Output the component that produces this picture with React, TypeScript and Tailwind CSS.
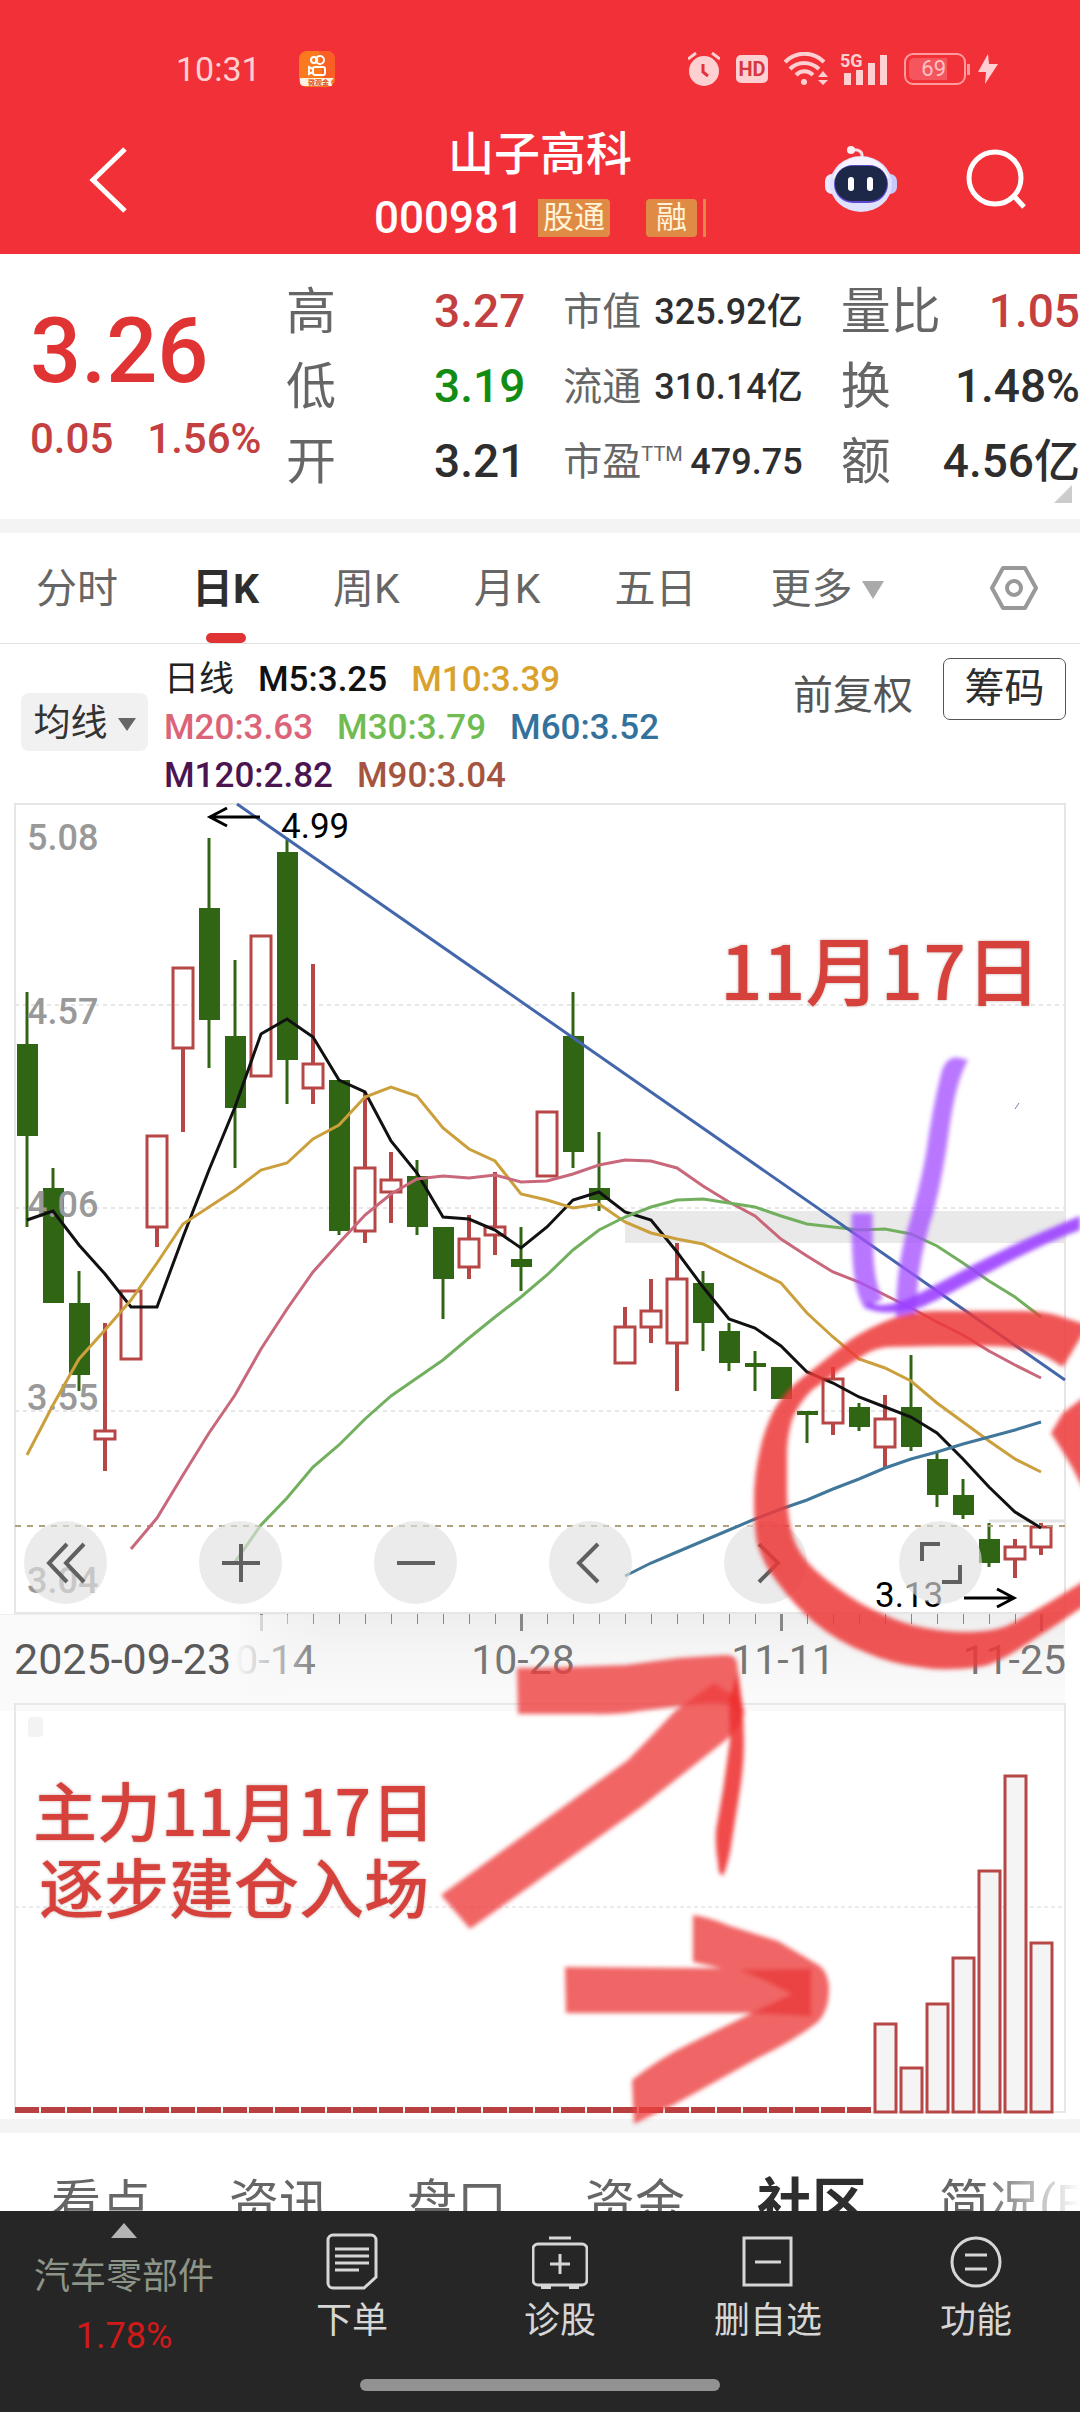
import { useState } from 'react';

const FONT = "font-['Roboto','Noto_Sans_CJK_SC',sans-serif]";

const GREEN = '#306613';
const RED = '#b74646';

// x position of the n-th trading day
const dayX = (i: number) => 27 + i * 26;

// [rising, high, body top, body bottom, low]
type Candle = [boolean, number, number, number, number];

const candles: Candle[] = [
  [false, 992, 1044, 1136, 1227],
  [false, 1168, 1188, 1303, 1303],
  [false, 1271, 1303, 1375, 1391],
  [true, 1323, 1430, 1440, 1471],
  [true, 1290, 1290, 1360, 1360],
  [true, 1135, 1135, 1228, 1247],
  [true, 967, 967, 1049, 1132],
  [false, 838, 908, 1020, 1068],
  [false, 960, 1036, 1108, 1168],
  [true, 935, 935, 1077, 1077],
  [false, 838, 852, 1060, 1104],
  [true, 964, 1063, 1089, 1104],
  [false, 1080, 1080, 1231, 1235],
  [true, 1092, 1167, 1232, 1243],
  [true, 1152, 1179, 1193, 1223],
  [false, 1160, 1176, 1227, 1235],
  [false, 1227, 1227, 1279, 1319],
  [true, 1215, 1238, 1268, 1279],
  [true, 1172, 1226, 1236, 1255],
  [false, 1227, 1259, 1267, 1291],
  [true, 1111, 1111, 1177, 1177],
  [false, 992, 1036, 1152, 1168],
  [false, 1132, 1188, 1200, 1211],
  [true, 1307, 1326, 1364, 1364],
  [true, 1279, 1310, 1328, 1343],
  [true, 1243, 1278, 1344, 1391],
  [false, 1271, 1283, 1323, 1351],
  [false, 1323, 1331, 1363, 1371],
  [false, 1351, 1363, 1367, 1391],
  [false, 1367, 1367, 1399, 1399],
  [false, 1411, 1411, 1415, 1443],
  [true, 1367, 1378, 1424, 1435],
  [false, 1403, 1407, 1427, 1431],
  [true, 1395, 1418, 1448, 1467],
  [false, 1355, 1407, 1447, 1451],
  [false, 1453, 1459, 1495, 1507],
  [false, 1479, 1495, 1515, 1519],
  [false, 1523, 1539, 1563, 1567],
  [true, 1539, 1546, 1560, 1578],
  [true, 1523, 1526, 1548, 1555],
];

const averages = [
  {
    name: 'M5',
    color: '#111111',
    start: 0,
    ys: [1220, 1211, 1245, 1274, 1307, 1307, 1237, 1170, 1107, 1034, 1019, 1037, 1080, 1092, 1141, 1173, 1217, 1219, 1230, 1248, 1227, 1200, 1192, 1212, 1220, 1252, 1287, 1319, 1328, 1346, 1372, 1383, 1397, 1407, 1417, 1433, 1459, 1487, 1512, 1528],
  },
  {
    name: 'M10',
    color: '#cb9f3c',
    start: 0,
    ys: [1455, 1405, 1359, 1330, 1300, 1263, 1224, 1207, 1190, 1170, 1163, 1139, 1125, 1097, 1087, 1096, 1128, 1149, 1161, 1194, 1200, 1208, 1204, 1222, 1233, 1239, 1244, 1257, 1270, 1283, 1313, 1337, 1359, 1368, 1381, 1403, 1422, 1441, 1459, 1472],
  },
  {
    name: 'M20',
    color: '#c8687a',
    start: 4,
    ys: [1549, 1518, 1475, 1433, 1395, 1349, 1309, 1272, 1243, 1215, 1194, 1179, 1176, 1178, 1175, 1182, 1181, 1174, 1165, 1160, 1161, 1168, 1186, 1202, 1216, 1239, 1256, 1272, 1282, 1295, 1308, 1322, 1335, 1351, 1365, 1378],
  },
  {
    name: 'M30',
    color: '#72b05f',
    start: 8,
    ys: [1562, 1525, 1498, 1467, 1445, 1419, 1396, 1378, 1360, 1338, 1317, 1297, 1275, 1250, 1230, 1217, 1207, 1200, 1199, 1203, 1207, 1216, 1224, 1227, 1230, 1229, 1234, 1246, 1263, 1281, 1297, 1317],
  },
  {
    name: 'M60',
    color: '#40779a',
    start: 23,
    ys: [1576, 1563, 1552, 1541, 1530, 1519, 1509, 1500, 1489, 1479, 1468, 1459, 1452, 1444, 1437, 1430, 1422],
  },
];

const priceLabels = [
  { text: '5.08', y: 850 },
  { text: '4.57', y: 1024 },
  { text: '4.06', y: 1217 },
  { text: '3.55', y: 1410 },
  { text: '3.04', y: 1593 },
];

// top edges of the last seven bars, the earlier days are flat
const flowTops = [2023, 2067, 2003, 1957, 1870, 1775, 1942];

const StatusBar = () => (
  <div className="flex h-[40px] items-center pl-[176px] pr-[82px] text-[#ffd0d2]">
    <span className="text-[34px] leading-10">10:31</span>
    <svg viewBox="0 0 36 36" className="ml-[38px] h-[36px] w-[36px]">
      <rect width="36" height="36" rx="8" fill="#fb7a1e" />
      <path d="M20 0h8a8 8 0 0 1 8 8v20H24z" fill="#f9552a" opacity=".7" />
      <g fill="none" stroke="#fff" strokeWidth="2">
        <circle cx="15" cy="9" r="3" />
        <circle cx="21" cy="9" r="4" />
        <rect x="14" y="16" width="12" height="8" rx="2" />
        <path d="M14 18l-4-2v7l4-2" />
      </g>
      <path d="M1 27h34l-3 3 1 5H5a4 4 0 0 1-4-4z" fill="#fff0e0" />
      <text x="9" y="34" fontSize="7" fontWeight="700" fill="#d9541e">微观金</text>
    </svg>
    <div className="ml-auto flex items-center">
      <svg viewBox="0 0 32 34" className="h-[34px] w-[32px]" fill="currentColor">
        <circle cx="16" cy="19" r="15" />
        <path d="M0 7L8 1M24 1l8 6" stroke="currentColor" strokeWidth="3" />
        <path d="M15 12v8l5 4" fill="none" stroke="#e0343c" strokeWidth="3" />
      </svg>
      <span className="ml-4 flex h-[28px] w-[32px] items-center justify-center rounded-[5px] bg-[#ffd0d2] text-[20px] font-bold text-[#d63840]">HD</span>
      <svg viewBox="0 0 44 34" className="ml-4 h-[34px] w-[44px]" fill="none" stroke="currentColor" strokeWidth="4">
        <path d="M1 10C12-1 29-1 40 10M6 17c8-8 20-8 29 0M12 23c5-5 12-5 17 0" />
        <circle cx="20" cy="30" r="3" fill="currentColor" stroke="none" />
        <path d="M34 25l5-6 5 6zM34 28h10l-5 5z" fill="currentColor" stroke="none" />
      </svg>
      <svg viewBox="0 0 48 34" className="ml-3 h-[34px] w-[48px] overflow-visible" fill="currentColor">
        <text x="0" y="15" fontSize="18" fontWeight="700">5G</text>
        <rect x="4" y="21" width="7" height="12" />
        <rect x="16" y="18" width="7" height="15" />
        <rect x="28" y="11" width="7" height="22" />
        <rect x="40" y="3" width="7" height="30" />
      </svg>
      <span className="ml-4 flex h-[32px] w-[62px] items-center rounded-[9px] border-2 border-[#ff9a9e] p-[3px]">
        <span className="flex h-full w-[38px] items-center justify-end rounded-l-[5px] bg-[#f5555c] pr-px text-[22px] leading-6 text-[#ffc0c3]">
          69
        </span>
      </span>
      <span className="ml-px h-[11px] w-[3px] bg-[#ff9a9e]" />
      <svg viewBox="0 0 20 32" className="ml-2 h-[32px] w-[20px]" fill="currentColor">
        <path d="M10 1L0 19h8l-1 12L20 11h-9z" />
      </svg>
    </div>
  </div>
);

const Robot = () => (
  <svg viewBox="0 0 72 66" className="h-[66px] w-[72px]">
    <path d="M26 4c9-1 12 2 11 9" fill="none" stroke="#fbdfe6" strokeWidth="3" />
    <circle cx="26" cy="4" r="4" fill="#fdeef2" />
    <rect x="0" y="28" width="14" height="20" rx="7" fill="#ece9ff" />
    <rect x="58" y="28" width="14" height="20" rx="7" fill="#c9c9f8" />
    <ellipse cx="36" cy="38" rx="31" ry="28" fill="#dfe0fb" />
    <path d="M8 32C14 16 25 11 36 11s22 5 28 21z" fill="#f7f4ff" />
    <rect x="9" y="19" width="54" height="38" rx="19" fill="#5a48c8" />
    <rect x="10" y="20" width="52" height="35" rx="17" fill="#1d2848" />
    <rect x="23" y="31" width="6" height="14" rx="3" fill="#fff" />
    <rect x="42" y="31" width="6" height="14" rx="3" fill="#fff" />
  </svg>
);

const Header = () => (
  <header className="h-[254px] bg-[#f23038] pt-[49px] text-white">
    <StatusBar />
    <div className="mt-[35px] grid grid-cols-[1fr_auto_1fr]">
      <button aria-label="返回" className="ml-[88px] mt-[23px] self-start justify-self-start">
        <svg viewBox="0 0 40 66" className="h-[66px] w-[40px]" fill="none" stroke="currentColor" strokeWidth="5">
          <path d="M37 2L5 33l32 31" />
        </svg>
      </button>
      <div className="flex flex-col items-center">
        <h1 className="text-[46px] font-medium leading-[60px]">山子高科</h1>
        <div className="mt-1 flex h-[60px] items-center">
          <span className="text-[44px] font-medium">000981</span>
          <span className="ml-[14px] rounded-r-[4px] bg-[#e08b45] px-[5px] text-[31px] leading-[38px] text-[#fff3d8]">股通</span>
          <span className="ml-9 rounded-[4px] bg-[#e08b45] px-[10px] text-[31px] leading-[38px] text-[#fff3d8]">融</span>
          <span className="ml-[6px] h-[38px] w-[3px] bg-[#e08b45]" />
        </div>
      </div>
      <div className="mr-[54px] mt-[22px] flex items-center gap-[69px] self-start justify-self-end">
        <button aria-label="智能助手">
          <Robot />
        </button>
        <button aria-label="搜索">
          <svg viewBox="0 0 60 60" className="h-[60px] w-[60px]" fill="none" stroke="currentColor" strokeWidth="5">
            <circle cx="29" cy="29" r="26" />
            <path d="M47 46l11 12" />
          </svg>
        </button>
      </div>
    </div>
  </header>
);

interface StatProps {
  label: string;
  value: string;
  tone?: string;
  small?: boolean;
  sup?: string;
}

const Stat = ({ label, value, tone = 'text-[#2e2e2e]', small, sup }: StatProps) => (
  <div className="flex h-[75px] items-center justify-between whitespace-nowrap">
    <dt className={small ? 'flex text-[39px] leading-[60px] text-[#666]' : 'text-[50px] leading-[60px] text-[#666]'}>
      {label}
      {sup && <sup className="top-0 text-[20px] leading-[44px]">{sup}</sup>}
    </dt>
    <dd className={`font-medium ${small ? 'text-[36px]' : 'text-[46px]'} ${tone}`}>{value}</dd>
  </div>
);

const Quote = () => (
  <section className="relative flex h-[265px] pt-5">
    <div className="w-[286px] pl-[30px] text-[#e03333]">
      <div className="mt-[24px] text-[90px] font-medium leading-[108px]">3.26</div>
      <div className="mt-2 flex gap-[34px] text-[42px] font-medium leading-[50px] text-[#c44040]">
        <span>0.05</span>
        <span>1.56%</span>
      </div>
    </div>
    <dl className="grid flex-1 grid-cols-3 content-start gap-x-[38px]">
      <Stat label="高" value="3.27" tone="text-[#c44040]" />
      <Stat label="市值" value="325.92亿" small />
      <Stat label="量比" value="1.05" tone="text-[#c44040]" />
      <Stat label="低" value="3.19" tone="text-[#128c12]" />
      <Stat label="流通" value="310.14亿" small />
      <Stat label="换" value="1.48%" />
      <Stat label="开" value="3.21" />
      <Stat label="市盈" value="479.75" small sup="TTM" />
      <Stat label="额" value="4.56亿" />
    </dl>
    <svg viewBox="0 0 18 18" className="absolute bottom-4 right-2 h-[18px] w-[18px]">
      <path d="M18 0v18H0z" fill="#cccccc" />
    </svg>
  </section>
);

const periods = ['分时', '日K', '周K', '月K', '五日'];

const PeriodTabs = () => {
  const [active, setActive] = useState('日K');

  return (
    <nav className="flex h-[111px] items-stretch gap-[74px] border-b border-[#e2e2e2] pl-[36px] pr-[42px] text-[41px] text-[#666]">
      {periods.map((p) => (
        <button
          key={p}
          onClick={() => setActive(p)}
          className={p === active ? 'relative whitespace-nowrap pt-1 font-bold text-[#2e2e2e]' : 'relative whitespace-nowrap pt-1'}
        >
          {p}
          {p === active && <span className="absolute bottom-0 left-1/2 h-[10px] w-[40px] -translate-x-1/2 rounded-full bg-[#e03333]" />}
        </button>
      ))}
      <button className="flex items-center gap-[9px] whitespace-nowrap pt-1">
        更多
        <svg viewBox="0 0 22 18" className="h-[18px] w-[22px]">
          <path d="M0 0h22L11 18z" fill="#aaaaaa" />
        </svg>
      </button>
      <button aria-label="设置" className="ml-auto">
        <svg viewBox="0 0 48 46" className="h-[46px] w-[48px]" fill="none" stroke="#999999" strokeWidth="4" strokeLinejoin="round">
          <path d="M13 3h22l11 20-11 20H13L2 23z" />
          <circle cx="24" cy="23" r="7" />
        </svg>
      </button>
    </nav>
  );
};

const Legend = () => (
  <section className="flex h-[156px] pl-[21px] pr-[14px]">
    <button className="flex h-[58px] w-[127px] items-center justify-center gap-[10px] self-center rounded-[8px] bg-[#f1f1f1] pt-1 text-[37px] text-[#333]">
      均线
      <svg viewBox="0 0 18 13" className="h-[13px] w-[18px]">
        <path d="M0 0h18L9 13z" fill="#666666" />
      </svg>
    </button>
    <div className="ml-4 pt-[12px] text-[35px] font-medium leading-[48px]">
      <div className="flex gap-[24px]">
        <span className="font-normal text-[#222]">日线</span>
        <span className="text-[#111]">M5:3.25</span>
        <span className="text-[#d9a22c]">M10:3.39</span>
      </div>
      <div className="flex gap-[24px]">
        <span className="text-[#dc6478]">M20:3.63</span>
        <span className="text-[#70bb52]">M30:3.79</span>
        <span className="text-[#33729c]">M60:3.52</span>
      </div>
      <div className="flex gap-[24px]">
        <span className="text-[#4b1552]">M120:2.82</span>
        <span className="text-[#a5543f]">M90:3.04</span>
      </div>
    </div>
    <button className="ml-auto mt-[16px] h-[72px] text-[40px] text-[#555]">前复权</button>
    <button className="ml-[30px] mt-[14px] h-[62px] w-[123px] rounded-[7px] border border-[#555] text-[40px] leading-[60px] text-[#2e2e2e]">
      筹码
    </button>
  </section>
);

const KLine = () => (
  <svg viewBox="0 800 1080 900" className="block w-full" role="img" aria-label="日K线">
    <defs>
      <linearGradient id="axisShade" x1="0" y1="0" x2="0" y2="1">
        <stop offset="0" stopColor="#eeeeee" />
        <stop offset="0.5" stopColor="#f6f6f6" />
        <stop offset="1" stopColor="#fbfbfb" />
      </linearGradient>
      <linearGradient id="axisFade" x1="0" y1="0" x2="1" y2="0">
        <stop offset="0" stopColor="#fafafa" />
        <stop offset="0.3" stopColor="#f9f9f9" stopOpacity="0.7" />
        <stop offset="1" stopColor="#f8f8f8" stopOpacity="0" />
      </linearGradient>
    </defs>

    <rect x="15" y="804" width="1050" height="809" fill="none" stroke="#e6e6e6" strokeWidth="2" />
    {[1005, 1208, 1411].map((y) => (
      <path key={y} d={`M15 ${y}H1065`} stroke="#e6e6e6" strokeWidth="2" strokeDasharray="4 4" />
    ))}
    <rect x="625" y="1211" width="440" height="32" fill="#e9e9e9" />
    <path d="M989 1521h76" stroke="#e4e4e4" strokeWidth="3" />

    {candles.map(([rising, high, top, bottom, low], i) => (
      <g key={i}>
        {rising ? (
          <>
            <path d={`M${dayX(i)} ${high}V${top}M${dayX(i)} ${bottom}V${low}`} stroke={RED} strokeWidth="4" />
            <rect x={dayX(i) - 10} y={top + 1} width="20" height={bottom - top - 2} fill="none" stroke={RED} strokeWidth="3" />
          </>
        ) : (
          <>
            <path d={`M${dayX(i)} ${high}V${low}`} stroke={GREEN} strokeWidth="3" />
            <rect x={dayX(i) - 10} y={top} width="21" height={bottom - top} fill={GREEN} />
          </>
        )}
      </g>
    ))}

    <path d="M15 1526H1065" stroke="#b0a27e" strokeWidth="2" strokeDasharray="6 6" />

    <g fontSize="36" fontWeight="500" fill="#999999">
      {priceLabels.map((l) => (
        <text key={l.text} x="27" y={l.y}>{l.text}</text>
      ))}
    </g>

    {averages.map((a) => (
      <polyline
        key={a.name}
        points={a.ys.map((y, i) => `${dayX(a.start + i)},${y}`).join(' ')}
        fill="none"
        stroke={a.color}
        strokeWidth="3"
      />
    ))}
    <path d="M237 804L1065 1380" stroke="#4466ab" strokeWidth="3" />

    <g fill="none" stroke="#000000" strokeWidth="3">
      <path d="M260 817H210M227 808l-17 9 17 9" />
      <path d="M964 1598h50M997 1589l17 9-17 9" />
    </g>
    <text x="281" y="838" fontSize="35">4.99</text>
    <text x="875" y="1607" fontSize="35">3.13</text>

    {/* date axis */}
    <rect x="0" y="1614" width="1065" height="86" fill="url(#axisShade)" />
    {Array.from({ length: 31 }, (_, n) => (
      <rect
        key={n}
        x={n % 10 === 0 ? 260 + n * 26 : 261 + n * 26}
        y="1614"
        width={n % 10 === 0 ? 3 : 1}
        height={n % 10 === 0 ? 17 : 10}
        fill="#888888"
      />
    ))}
    <g fontSize="41" fill="#777777">
      <text x="264" y="1674" textAnchor="middle">10-14</text>
      <text x="523" y="1674" textAnchor="middle">10-28</text>
      <text x="783" y="1674" textAnchor="middle">11-11</text>
      <text x="1066" y="1674" textAnchor="end">11-25</text>
    </g>
    {/* the start date covers the scrolled labels and fades out to the right */}
    <rect x="0" y="1615" width="234" height="85" fill="#fafafa" />
    <rect x="234" y="1615" width="90" height="85" fill="url(#axisFade)" />
    <text x="14" y="1674" fontSize="43" fill="#5a5a5a">2025-09-23</text>
  </svg>
);

const FlowChart = () => (
  <svg viewBox="0 1700 1080 419" className="block w-full" role="img" aria-label="主力资金">
    <rect x="0" y="1700" width="1065" height="11" fill="#fafafa" />
    <rect x="15" y="1704" width="1050" height="408" fill="none" stroke="#e8e8e8" strokeWidth="2" />
    <rect x="28" y="1717" width="15" height="20" rx="4" fill="#f3f3f3" />
    <path d="M15 1907H1065" stroke="#d8d8d8" strokeWidth="1" strokeDasharray="4 3" />
    {Array.from({ length: 33 }, (_, i) => (
      <rect key={i} x={15 + i * 26} y="2107" width="24" height="6" fill="#b94040" />
    ))}
    {flowTops.map((top, n) => (
      <rect key={n} x={875 + n * 26} y={top + 1} width="21" height={2111 - top} fill="#f5f4f4" stroke="#b74646" strokeWidth="3" />
    ))}
  </svg>
);

// freehand marks and captions drawn on top of both charts
const Doodles = () => (
  <svg viewBox="0 800 1080 1319" className="pointer-events-none absolute inset-0 h-full w-full overflow-visible">
    <defs>
      <filter id="brush" x="-10%" y="-10%" width="120%" height="120%">
        <feGaussianBlur stdDeviation="2" />
      </filter>
    </defs>
    <g filter="url(#brush)">
      <path d="M968 1060L960 1058Q946 1055 941 1074Q932 1110 926 1154Q918 1196 906 1234Q896 1270 896 1317H916Q917 1290 919 1272Q924 1240 934 1210Q944 1170 949 1130Q956 1080 968 1060Z" fill="#a550ff" opacity=".78" />
      <path d="M862 1213C862 1264 864 1288 874 1304" fill="none" stroke="#a550ff" strokeWidth="21" opacity=".78" />
      <path d="M866 1302C880 1308 898 1304 914 1296C950 1278 1000 1248 1080 1216V1230C1020 1252 960 1290 922 1307C900 1314 880 1314 868 1309Z" fill="#9b40ff" opacity=".9" />
      <g fill="#ee3a3a" opacity=".86">
        <path d="M1084 1324L1056 1315Q1040 1311 1022 1311H936Q912 1311 891 1319Q870 1327 850 1340L802 1378Q784 1392 774 1410Q764 1430 760 1450Q754 1475 754 1500Q754 1525 757 1543Q764 1566 778 1583Q794 1605 815 1623Q838 1642 867 1653Q892 1664 919 1667Q936 1670 953 1669Q971 1669 988 1665Q1006 1658 1022 1647L1056 1625L1084 1606V1581L1050 1602L1015 1622Q1000 1630 984 1631Q965 1633 946 1631Q925 1629 905 1623Q882 1615 860 1603Q835 1588 815 1570Q799 1555 793 1537Q787 1516 787 1493V1450Q788 1432 793 1417Q800 1402 812 1390L843 1368L864 1355Q875 1348 888 1347L936 1346H988Q1006 1346 1022 1349Q1038 1352 1050 1359L1063 1367L1084 1332Z" />
        <path d="M1084 1397L1063 1413L1051 1433L1060 1447L1072 1467L1084 1490Z" />
      </g>
      <path d="M517 1668H540L626 1665L678 1658L726 1655Q735 1655 737 1662L741 1700L745 1715L730 1704Q705 1702 689 1705L640 1711Q615 1715 592 1714H518Z" fill="#ed4040" opacity=".8" />
      <path d="M441 1895L628 1760Q652 1736 675 1711L714 1683L741 1700L742 1722L726 1740L640 1808L470 1929Z" fill="#ed4040" opacity=".8" />
      <path d="M738 1672L743 1710L744 1740Q744 1765 740 1790L732 1840Q729 1862 723 1876Q718 1874 718 1863Q715 1846 716 1830L723 1790L730 1740L729 1700Z" fill="#ee3030" opacity=".88" />
      <g fill="#ed4040" opacity=".8">
        <path d="M565 1967L811 1969V2016L752 2013H566Z" />
        <path d="M693 1915Q712 1918 730 1926L778 1941L820 1966Q829 1974 829 1990Q829 2010 818 2022Q795 2040 758 2058Q715 2082 675 2104L634 2124L632 2080Q660 2058 689 2044L752 2013L792 1994L764 1980L730 1970L693 1962Z" />
      </g>
      <path d="M740 1970L811 1969V2016L752 2013L792 1994L764 1980Z" fill="#e82828" opacity=".55" />
    </g>
    <path d="M1015 1109l4-6" stroke="#8d6fb0" strokeWidth="1" />
    <g fontFamily="'Noto Sans CJK SC', sans-serif" fill="#d6423b" fontWeight="500" className="[text-shadow:0_0_3px_rgba(120,60,60,0.45)]">
      <text x="720" y="1000" fontSize="75">11月17日</text>
      <text x="33" y="1836" fontSize="64">主力11月17日</text>
      <text x="39" y="1913" fontSize="65">逐步建仓入场</text>
    </g>
  </svg>
);

const controls = [
  { label: '最左', d: 'M22 2L4 21l18 19M39 2L21 21l18 19' },
  { label: '放大', d: 'M21 2v38M2 21h38' },
  { label: '缩小', d: 'M2 21h38' },
  { label: '左移', d: 'M28 2L9 21l19 19' },
  { label: '右移', d: 'M14 2l19 19-19 19' },
  { label: '全屏', d: 'M2 19V2h18M40 23v17H22' },
];

const ChartControls = () => (
  <div className="absolute inset-x-0 top-[721px] flex justify-between pl-[24px] pr-[98px]">
    {controls.map((c) => (
      <button key={c.label} aria-label={c.label} className="flex h-[83px] w-[83px] items-center justify-center rounded-full bg-[rgba(224,224,224,0.65)]">
        <svg viewBox="0 0 42 42" className="h-[42px] w-[42px]" fill="none" stroke="#606060" strokeWidth="4">
          <path d={c.d} />
        </svg>
      </button>
    ))}
  </div>
);

const infoTabs = ['看点', '资讯', '盘口', '资金', '社区', '简况(F10)'];

const InfoTabs = () => (
  <nav className="relative flex h-[78px] gap-[78px] overflow-hidden pl-[51px] pt-[46px] text-[50px] leading-[50px] text-[#666]">
    {infoTabs.map((t) => (
      <button
        key={t}
        className={t === '社区' ? '-mx-[6px] shrink-0 whitespace-nowrap text-[55px] font-bold text-[#2e2e2e]' : 'shrink-0 whitespace-nowrap'}
      >
        {t}
      </button>
    ))}
    <div className="absolute inset-y-0 right-0 w-[100px] bg-gradient-to-r from-transparent to-white" />
  </nav>
);

const actions = [
  {
    label: '下单',
    icon: (
      <>
        <path d="M9 2h38a5 5 0 0 1 5 5v37L40 55H9a5 5 0 0 1-5-5V7a5 5 0 0 1 5-5z" />
        <path d="M11 16h34M11 23h34M11 30h34M11 37h24" />
      </>
    ),
  },
  {
    label: '诊股',
    icon: (
      <>
        <rect x="1" y="11" width="54" height="41" rx="5" />
        <path d="M17 5h22M28 21v20M18 31h20" />
        <path d="M9 54h10M37 54h10" strokeWidth="4" />
      </>
    ),
  },
  {
    label: '删自选',
    icon: (
      <>
        <rect x="4" y="5" width="47" height="47" />
        <path d="M15 29h26" />
      </>
    ),
  },
  {
    label: '功能',
    icon: (
      <>
        <circle cx="28" cy="29" r="24" />
        <path d="M17 22h22M17 36h22" />
      </>
    ),
  },
];

const BottomBar = () => (
  <footer className="h-[201px] bg-[#262626]">
    <div className="flex h-[168px]">
      <button className="flex w-[248px] flex-col items-center pt-3">
        <svg viewBox="0 0 26 15" className="h-[15px] w-[26px]">
          <path d="M13 0l13 15H0z" fill="#b4b4b4" />
        </svg>
        <span className="mt-[14px] text-[36px] leading-[50px] text-[#8d9488]">汽车零部件</span>
        <span className="mt-[9px] text-[36px] leading-[50px] text-[#d01a1a]">1.78%</span>
      </button>
      {actions.map((a) => (
        <button key={a.label} className="flex flex-1 flex-col items-center pt-[22px] text-[36px] leading-[50px] text-[#d6d6d6]">
          <svg viewBox="0 0 56 57" className="h-[57px] w-[56px]" fill="none" stroke="currentColor" strokeWidth="3">
            {a.icon}
          </svg>
          <span className="mt-[6px]">{a.label}</span>
        </button>
      ))}
    </div>
    <div className="mx-auto h-[12px] w-1/3 rounded-full bg-[#929292]" />
  </footer>
);

const App = () => (
  <main className={`w-full overflow-x-hidden bg-white ${FONT}`}>
    <Header />
    <Quote />
    <div className="h-[14px] bg-[#f4f4f4]" />
    <PeriodTabs />
    <Legend />
    <section className="relative">
      <KLine />
      <FlowChart />
      <ChartControls />
      <Doodles />
    </section>
    <div className="h-[14px] bg-[#f4f4f4]" />
    <InfoTabs />
    <BottomBar />
  </main>
);

export default App;
